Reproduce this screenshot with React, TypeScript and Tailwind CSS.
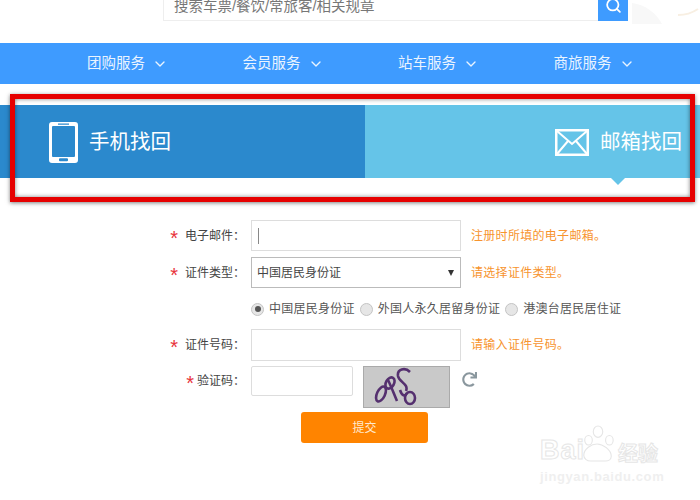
import { ChevronDown, Search } from 'lucide-react';
import { FaRedo } from 'react-icons/fa';

const navItems = ['团购服务', '会员服务', '站车服务', '商旅服务'];
const font = "font-['Liberation_Sans','Noto_Sans_CJK_SC',sans-serif]";

function PhoneIcon() {
    return (
        <svg width="29" height="41" viewBox="0 0 29 41" className="shrink-0">
            <path
                fillRule="evenodd"
                fill="#fff"
                d="M3 0h23a3 3 0 0 1 3 3v35a3 3 0 0 1-3 3H3a3 3 0 0 1-3-3V3a3 3 0 0 1 3-3zM3 5v29a1 1 0 0 0 1 1h21a1 1 0 0 0 1-1V5a1 1 0 0 0-1-1H4a1 1 0 0 0-1 1zM9 1.6v1.2h11V1.6zM11 36.3a1 1 0 0 0-1 1v1a1 1 0 0 0 1 1h7a1 1 0 0 0 1-1v-1a1 1 0 0 0-1-1z"
            />
        </svg>
    );
}

function MailIcon() {
    return (
        <svg width="34" height="27" viewBox="0 0 34 27" fill="none" stroke="#fff" className="shrink-0">
            <rect x="1.25" y="1.25" width="31.5" height="24.5" strokeWidth="2.5" />
            <path d="M2 2l15 13L32 2M2 25l11-13M32 25L21 12" strokeWidth="2" />
        </svg>
    );
}

function Captcha() {
    return (
        <div className="ml-[10px] h-[42px] w-[87px] border border-[#aaa] bg-[#c9c9c9]">
            <svg width="85" height="40" viewBox="0 0 85 40" fill="none" stroke="#55306f" strokeWidth="2.6">
                <ellipse cx="17" cy="27" rx="4" ry="8" transform="rotate(25 17 27)" />
                <ellipse cx="26" cy="16" rx="4" ry="6" transform="rotate(30 26 16)" />
                <path d="M24 13c3 6 6 14 9 21" />
                <path d="M46 5C41 0 33 2 34 9c1 6 11 8 8 15" />
                <ellipse cx="46" cy="31" rx="5" ry="6" />
                <path d="M36 23c2 6 5 7 7 3" />
            </svg>
        </div>
    );
}

function Label({ text, tight }: { text: string; tight?: boolean }) {
    return (
        <div className="flex w-[251px] shrink-0 items-center justify-end pr-[6px] text-[12px] text-[#444]">
            <span className={`translate-y-[2px] text-[20px] leading-none text-[#e8343c] ${tight ? 'mr-[3px]' : 'mr-[7px]'}`}>*</span>
            {text}：
        </div>
    );
}

function Radio({ checked, text }: { checked?: boolean; text: string }) {
    return (
        <span className="flex items-center gap-[5px]">
            <span className="flex h-[13px] w-[13px] items-center justify-center rounded-full border border-[#c4c4c4] bg-[#e6e6e6]">
                {checked && <span className="h-[6px] w-[6px] rounded-full bg-[#555]" />}
            </span>
            {text}
        </span>
    );
}

function Watermark() {
    return (
        <div className="absolute left-[540px] top-[424px] text-white">
            <div className="flex items-end">
                <span className="font-['Liberation_Sans',sans-serif] text-[27px] font-bold leading-none tracking-[1px] [-webkit-text-stroke:1px_#e6e6e6]">Bai</span>
                <svg width="36" height="40" viewBox="0 0 38 42" fill="none" stroke="#e6e6e6" strokeWidth="1.2" className="ml-[-5px]">
                    <ellipse cx="9" cy="17" rx="4" ry="5" />
                    <ellipse cx="19" cy="8" rx="5" ry="6" />
                    <ellipse cx="31" cy="17" rx="4" ry="5" />
                    <path d="M4 33c0-7 8-12 14-12s15 6 15 13c0 4-4 5-6 5H11c-3 0-7-2-7-6z" />
                </svg>
                <span className="ml-[2px] text-[20px] font-bold leading-none [-webkit-text-stroke:1px_#e6e6e6]">经验</span>
            </div>
            <div className="mt-[6px] font-['Liberation_Sans',sans-serif] text-[13px] font-bold leading-none tracking-[0.6px] text-[#efefef]">jingyan.baidu.com</div>
        </div>
    );
}

export default function App() {
    return (
        <div className={`relative h-[500px] w-[700px] overflow-hidden bg-white ${font}`}>
            {/* Search */}
            <div className="relative h-[43px] pl-[163px]">
                <div className="flex h-[21px] w-[465px] items-start border-b border-l border-[#eee]">
                    <span className="mt-[-2px] flex-1 pl-[10px] text-[14.5px] leading-[16px] text-[#777]">搜索车票/餐饮/常旅客/相关规章</span>
                    <span className="flex h-[21px] w-[30px] items-start justify-center bg-[#3e9bff] text-white">
                        <Search size={17} strokeWidth={2.5} className="mt-[-3px]" />
                    </span>
                </div>
                <svg width="80" height="26" viewBox="0 0 80 26" fill="none" className="absolute left-[628px] top-0">
                    <path d="M4 3c14 2 24 10 30 21L4 24z" fill="#f8f8f8" />
                    <path d="M50 15c7 0 14-2 20-6" stroke="#f8efe2" strokeWidth="2" />
                </svg>
            </div>

            {/* Nav */}
            <div className="flex h-[41px] items-center bg-[#3e9bff] pl-[87px] text-[14.5px] text-[#eaf4ff]">
                {navItems.map(item => (
                    <div key={item} className="flex w-[155.5px] shrink-0 items-center gap-[7px]">
                        {item}
                        <ChevronDown size={16} strokeWidth={2} />
                    </div>
                ))}
            </div>

            {/* Tabs */}
            <div className="mt-[21px] flex h-[73px] text-[20.5px] text-white">
                <div className="flex w-[365px] items-center gap-[11px] bg-[#2b89cd] pl-[49px] pt-[2px]">
                    <PhoneIcon />
                    手机找回
                </div>
                <div className="relative flex flex-1 items-center justify-end gap-[11px] bg-[#65c4e8] pr-[18px] pt-[2px]">
                    <MailIcon />
                    邮箱找回
                    <span className="absolute right-[75px] top-full h-0 w-0 border-x-[7px] border-t-[7px] border-x-transparent border-t-[#65c4e8]" />
                </div>
            </div>

            {/* Form */}
            <div className="mt-[42px] flex flex-col">
                <div className="flex h-[31px] items-center">
                    <Label text="电子邮件" />
                    <div className="flex h-[31px] w-[210px] items-center border border-[#ddd] pl-[6px]">
                        <span className="h-[16px] w-px bg-[#888]" />
                    </div>
                    <span className="ml-[10px] text-[12px] tracking-[0.3px] text-[#f7942e]">注册时所填的电子邮箱。</span>
                </div>
                <div className="mt-[6px] flex h-[31px] items-center">
                    <Label text="证件类型" />
                    <div className="flex h-[31px] w-[210px] items-center justify-between border border-[#bbb] pl-[5px] pr-[6px] text-[12px] text-[#444]">
                        中国居民身份证
                        <span className="h-0 w-0 border-x-[3.5px] border-t-[6px] border-x-transparent border-t-[#333]" />
                    </div>
                    <span className="ml-[10px] text-[12px] tracking-[0.3px] text-[#f7942e]">请选择证件类型。</span>
                </div>
                <div className="ml-[251px] mt-[12px] flex h-[16px] translate-y-[1px] items-center gap-[5px] text-[12px] tracking-[0.25px] text-[#555]">
                    <Radio checked text="中国居民身份证" />
                    <Radio text="外国人永久居留身份证" />
                    <Radio text="港澳台居民居住证" />
                </div>
                <div className="mt-[13px] flex h-[32px] items-center">
                    <Label text="证件号码" />
                    <div className="h-[32px] w-[210px] border border-[#ddd]" />
                    <span className="ml-[10px] text-[12px] tracking-[0.3px] text-[#f7942e]">请输入证件号码。</span>
                </div>
                <div className="mt-[5px] flex h-[42px] items-start">
                    <div className="flex h-[30px] items-center">
                        <Label text="验证码" tight />
                    </div>
                    <div className="h-[30px] w-[102px] rounded-[2px] border border-[#ddd]" />
                    <Captcha />
                    <FaRedo size={15} className="ml-[12px] mt-[6px] text-[#8a979e]" />
                </div>
                <div className="ml-[301px] mt-[4px] flex h-[31px] w-[127px] items-center justify-center rounded-[3px] bg-[#ff8400] text-[12px] text-[#ffe9cf]">
                    提交
                </div>
            </div>

            <Watermark />

            {/* Red annotation box */}
            <div className="absolute left-[10px] top-[94px] h-[108px] w-[685px] border-[5px] border-[#e60000] shadow-[0_1px_4px_rgba(0,0,0,0.5),inset_0_0_4px_rgba(0,0,0,0.5)]" />
        </div>
    );
}
